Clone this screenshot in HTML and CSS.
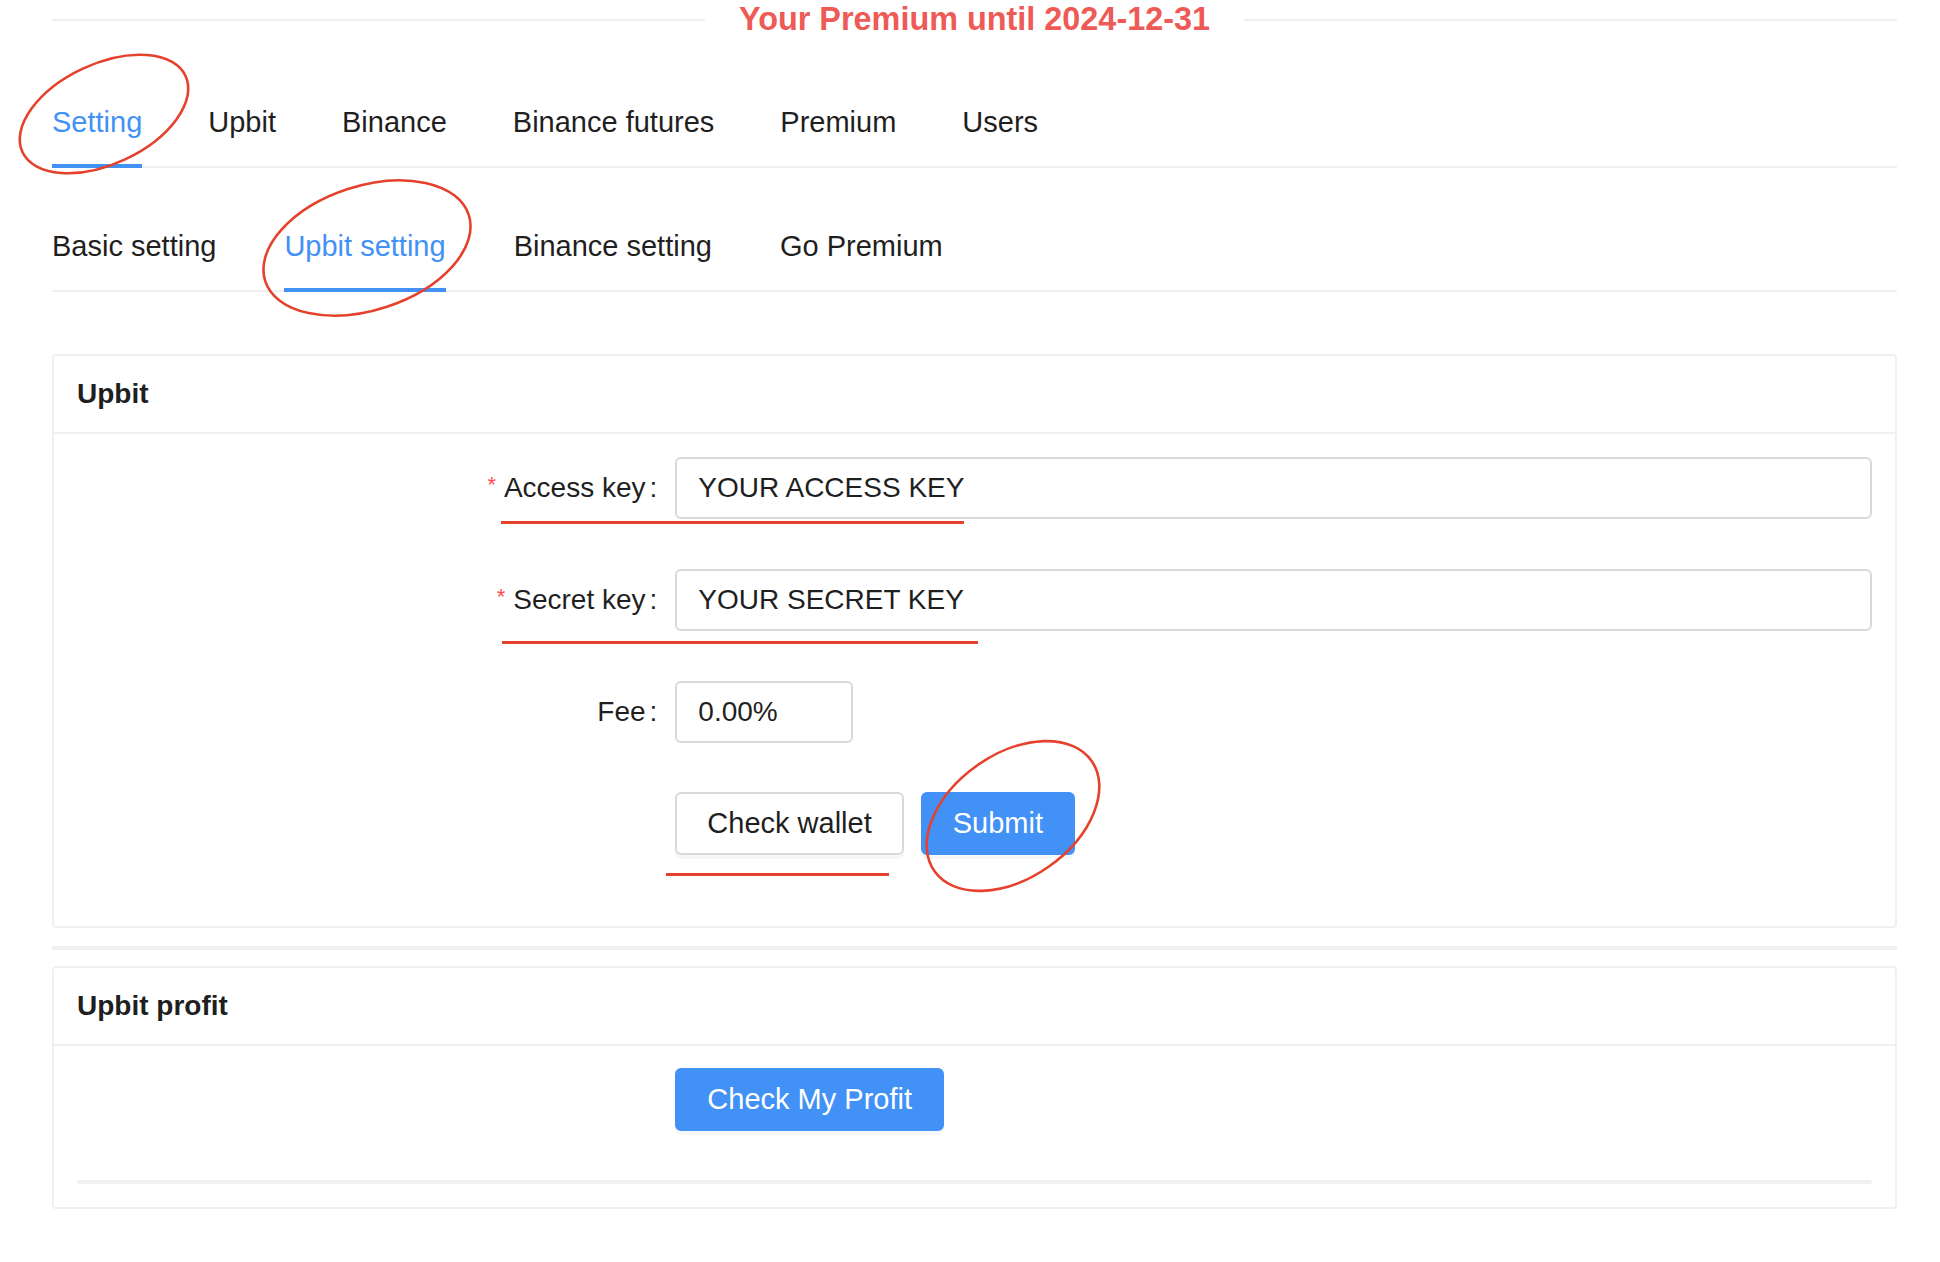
FILE: index.html
```html
<!DOCTYPE html>
<html lang="en">
<head>
    <meta charset="UTF-8">
    <meta name="viewport" content="width=device-width, initial-scale=1.0">
    <title>Upbit setting</title>
    <link rel="stylesheet" href="styles.css">
</head>
<body>
    <div class="page">
        <div class="premium-divider"><span>Your Premium until 2024-12-31</span></div>

        <nav class="tabs main-tabs">
            <a class="tab active">Setting</a>
            <a class="tab">Upbit</a>
            <a class="tab">Binance</a>
            <a class="tab">Binance futures</a>
            <a class="tab">Premium</a>
            <a class="tab">Users</a>
        </nav>

        <nav class="tabs sub-tabs">
            <a class="tab">Basic setting</a>
            <a class="tab active">Upbit setting</a>
            <a class="tab">Binance setting</a>
            <a class="tab">Go Premium</a>
        </nav>

        <section class="card">
            <div class="card-head">Upbit</div>
            <form class="card-body" id="upbitForm">
                <div class="form-row">
                    <label class="required" for="access_key">Access key</label>
                    <div class="control"><input id="access_key" name="access_key" value="YOUR ACCESS KEY"></div>
                </div>
                <div class="form-row">
                    <label class="required" for="secret_key">Secret key</label>
                    <div class="control"><input id="secret_key" name="secret_key" value="YOUR SECRET KEY"></div>
                </div>
                <div class="form-row">
                    <label for="fee">Fee</label>
                    <div class="control"><input id="fee" name="fee" class="fee-input" value="0.00%"></div>
                </div>
                <div class="form-row last">
                    <div class="control actions">
                        <button type="button" class="btn">Check wallet</button>
                        <button type="submit" class="btn btn-primary">Submit</button>
                    </div>
                </div>
            </form>
        </section>

        <hr class="card-split">

        <section class="card profit-card">
            <div class="card-head">Upbit profit</div>
            <div class="card-body profit-body">
                <div class="form-row">
                    <div class="control">
                        <button type="button" class="btn btn-primary">Check My Profit</button>
                    </div>
                </div>
                <hr class="body-line">
            </div>
        </section>
    </div>

    <!-- red marks drawn over the screenshot -->
    <svg class="marks" width="1940" height="1262" viewBox="0 0 1940 1262">
        <ellipse cx="104" cy="114" rx="90" ry="50" transform="rotate(-25 104 114)"/>
        <ellipse cx="367" cy="248" rx="107" ry="62" transform="rotate(-18 367 248)"/>
        <ellipse cx="1013" cy="816" rx="96" ry="62" transform="rotate(-35 1013 816)"/>
        <line x1="501" y1="522.5" x2="964" y2="522.5"/>
        <line x1="502" y1="642.5" x2="978" y2="642.5"/>
        <line x1="666" y1="874.5" x2="889" y2="874.5"/>
    </svg>
</body>
</html>
```

FILE: styles.css
```css
body { margin: 0; font-family: "Liberation Sans", Arial, sans-serif; color: #1f1f1f; background: #fff; }
.page { padding: 1px 43px 40px 52px; }

.premium-divider { display: flex; align-items: center; gap: 34px; font-size: 32.4px; line-height: 37px; font-weight: 700; color: #ee5a56; }
.premium-divider::before, .premium-divider::after { content: ""; flex: 1; height: 2px; background: #f0f0f0; }

.tabs { display: flex; border-bottom: 2px solid #f0f0f0; }
.main-tabs { margin-top: 66px; gap: 66px; }
.sub-tabs { margin-top: 60px; gap: 68px; }
.tab { position: relative; font-size: 29px; line-height: 36px; padding-bottom: 26px; cursor: pointer; }
.tab.active { color: #4191f6; }
.tab.active::after { content: ""; position: absolute; left: 0; right: 0; bottom: -2px; height: 4px; background: #4191f6; }

.card { margin-top: 62px; border: 2px solid #f0f0f0; border-radius: 4px; }
.card.profit-card { margin-top: 0; }
.card-head { padding: 20px 23px; font-size: 28px; line-height: 36px; font-weight: 700; border-bottom: 2px solid #f0f0f0; }
.card-body { padding: 23px; }
.profit-body { padding-top: 22px; }

.form-row { display: grid; grid-template-columns: 1fr 2fr; align-items: center; margin-bottom: 50px; }
.form-row:nth-child(3) { margin-bottom: 49px; }
.form-row.last { margin-bottom: 48px; }
.profit-body .form-row { margin-bottom: 49px; }
.form-row label { justify-self: end; font-size: 28px; line-height: 62px; }
.form-row label::after { content: ":"; margin: 0 18px 0 4px; }
.form-row label.required::before { content: "*"; color: #ff4d4f; font-size: 22px; line-height: 1; vertical-align: 5px; margin-right: 8px; }
.control { grid-column: 2; }
.actions { display: flex; gap: 17px; }

input { display: block; box-sizing: border-box; width: 100%; height: 62px; margin: 0; padding: 0 21px; border: 2px solid #d9d9d9; border-radius: 6px; font-family: inherit; font-size: 28px; color: #1f1f1f; background: #fff; }
.fee-input { width: 178px; }

.btn { display: block; box-sizing: border-box; height: 63px; margin: 0; padding: 0 30px; border: 2px solid #d9d9d9; border-radius: 6px; background: #fff; color: #1f1f1f; font-family: inherit; font-size: 29px; box-shadow: 0 4px 0 rgba(0, 0, 0, 0.03); cursor: pointer; }
.btn-primary { background: #4191f6; border-color: #4191f6; color: #fff; }

.card-split { margin: 18px 0 16px; height: 4px; border: 0; background: #f0f0f0; }
.body-line { margin: 0; height: 4px; border: 0; border-radius: 2px; background: #f0f0f0; }

.marks { position: absolute; top: 0; left: 0; pointer-events: none; }
.marks ellipse, .marks line { fill: none; stroke: #e5412d; stroke-width: 2.6; }
.marks line { stroke-width: 3; }
```
